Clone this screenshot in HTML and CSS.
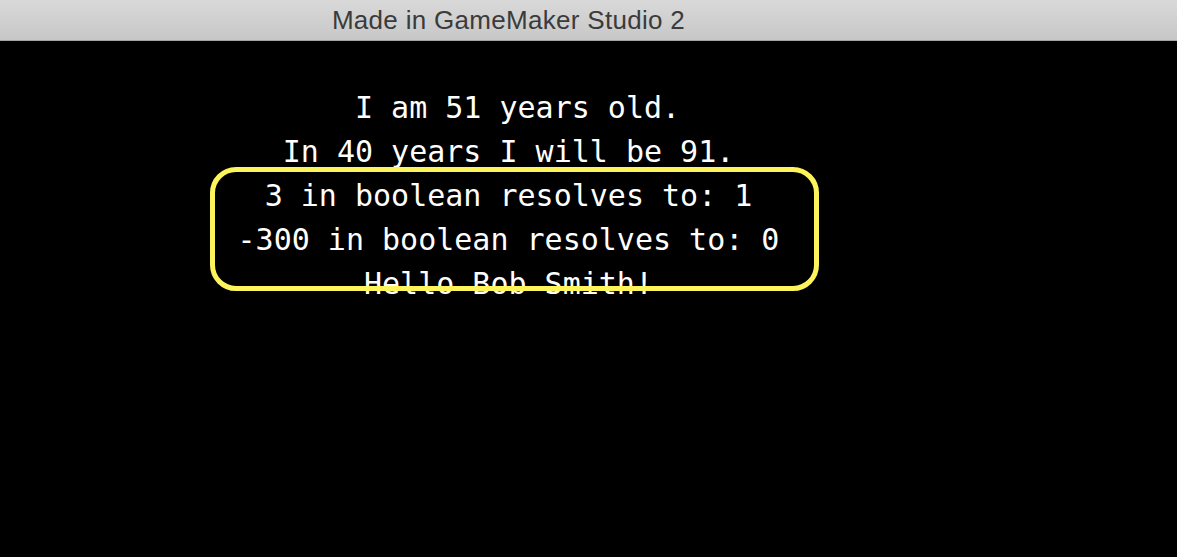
FILE: index.html
```html
<!DOCTYPE html>
<html>
<head>
<meta charset="utf-8">
<title>Made in GameMaker Studio 2</title>
<link rel="stylesheet" href="styles.css">
</head>
<body>
<div class="window">
  <header class="titlebar">
    <div class="stage"><span class="title">Made in GameMaker Studio 2</span></div>
  </header>
  <main class="game">
    <div class="stage lines">
      <div class="line"> I am 51 years old.</div>
      <div class="line">In 40 years I will be 91.</div>
      <div class="line">3 in boolean resolves to: 1</div>
      <div class="line">-300 in boolean resolves to: 0</div>
      <div class="line">Hello Bob Smith!</div>
    </div>
    <div class="highlight"></div>
  </main>
</div>
</body>
</html>
```

FILE: styles.css
```css
html, body {
  margin: 0;
  padding: 0;
  background: #000;
}

.window {
  width: 1177px;
  height: 557px;
  display: flex;
  flex-direction: column;
  overflow: hidden;
}

.stage {
  width: 1017px;
  text-align: center;
}

.titlebar {
  height: 40px;
  flex: none;
  background: linear-gradient(to bottom, #d9d9d9, #c7c7c7);
  border-bottom: 1px solid #a3a3a3;
}

.title {
  font-family: "Liberation Sans", Arial, sans-serif;
  font-size: 26px;
  letter-spacing: 0.3px;
  line-height: 40px;
  color: #3b3b3b;
}

.game {
  position: relative;
  flex: 1;
  background: #000;
}

.lines {
  padding-top: 45px;
}

.line {
  font-family: "DejaVu Sans Mono", "Liberation Mono", monospace;
  font-size: 30px;
  line-height: 44px;
  height: 44px;
  color: #fff;
  white-space: pre;
}

.highlight {
  position: absolute;
  left: 210px;
  top: 126px;
  width: 599px;
  height: 114px;
  border: 5px solid #fcf45a;
  border-radius: 26px;
}
```
